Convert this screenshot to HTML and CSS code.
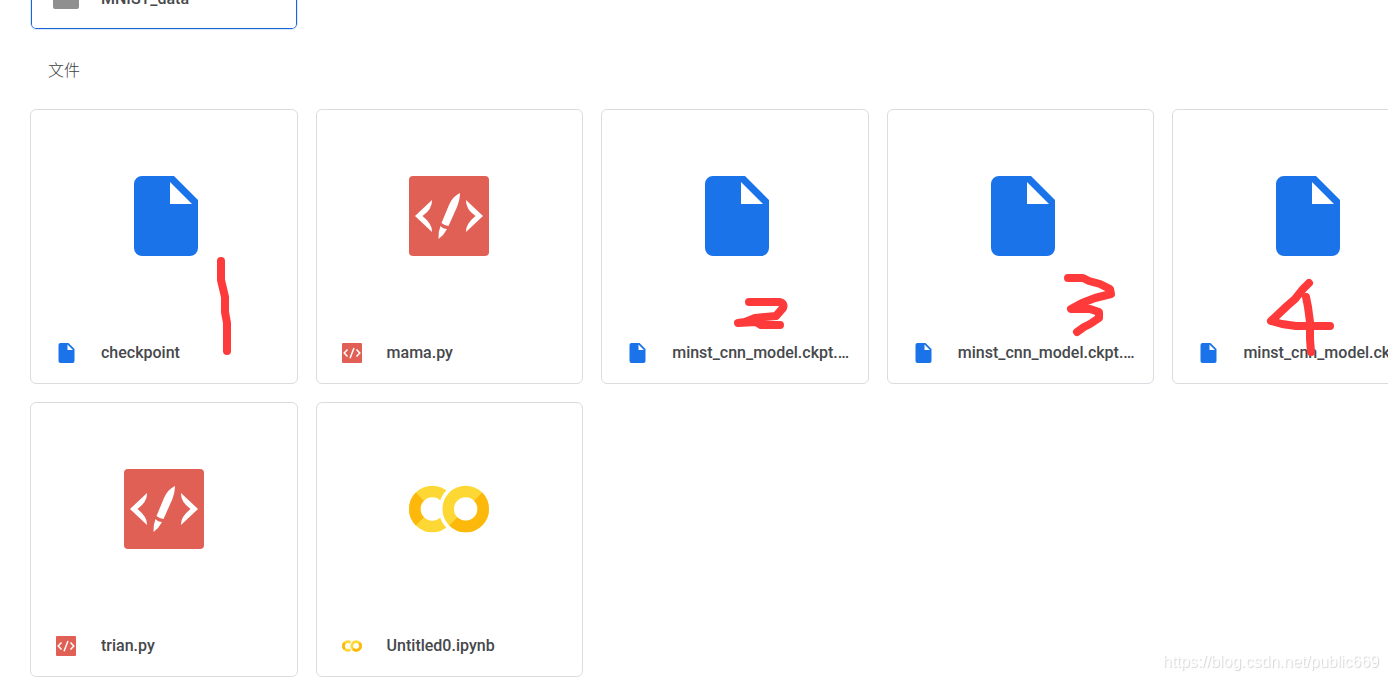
FILE: index.html
```
<!DOCTYPE html>
<html lang="zh-CN">
<head>
    <meta charset="UTF-8">
    <meta name="viewport" content="width=device-width, initial-scale=1.0">
    <title>文件</title>
    <link rel="stylesheet" href="styles.css">
</head>
<body>
    <!-- Shared icons -->
    <svg class="sprite" aria-hidden="true">
        <symbol id="icon-folder" viewBox="0 0 26 20">
            <path fill="#8f8f8f" d="M2 0H10l2.500 2.500H24A2 2 0 0 1 26 4.500V18a2 2 0 0 1-2 2H2a2 2 0 0 1-2-2V2A2 2 0 0 1 2 0z"/>
        </symbol>
        <symbol id="icon-file" viewBox="0 0 80 80">
            <path fill="#1a73e8" fill-rule="evenodd" d="M18 0H50L74 24V72a8 8 0 0 1-8 8H18a8 8 0 0 1-8-8V8a8 8 0 0 1 8-8zM46 6V28H68z"/>
        </symbol>
        <symbol id="icon-code" viewBox="0 0 80 80">
            <rect width="80" height="80" rx="4" fill="#e06055"/>
            <g fill="#fff">
                <path d="M23 24L6 40 23 56Q23.500 48 13.500 40 23.500 33 23 24z"/>
                <path d="M57 24L74 40 57 56Q56.500 48 66.500 40 56.500 33 57 24z"/>
                <path d="M51 17Q44 20 40 29L32.500 47Q36 50 39.500 50L48 31Q51 23 51 17z"/>
                <path d="M31.500 50Q34 53 38 53 35 59 29.500 63 29 56 31.500 50z"/>
            </g>
        </symbol>
        <symbol id="icon-code-small" viewBox="0 0 20 20">
            <rect width="20" height="20" rx="1" fill="#e06055"/>
            <path fill="none" stroke="#fff" stroke-width="1.500" d="M5.500 6.500L2.200 10 5.500 13.500M14.500 6.500L17.800 10 14.500 13.500M12 5L8 15.200"/>
        </symbol>
        <symbol id="icon-colab" viewBox="0 0 80 80">
            <g fill="none" stroke-width="11.500">
                <circle cx="23.300" cy="40" r="17.500" stroke="#fdd835"/>
                <path stroke="#fdb90b" d="M10.900 27.600A17.500 17.500 0 0 0 10.900 52.400"/>
            </g>
            <circle cx="56.700" cy="40" r="27" fill="#fff"/>
            <g fill="none" stroke-width="11.500">
                <circle cx="56.700" cy="40" r="17.500" stroke="#fdd835"/>
                <path stroke="#fdb90b" d="M69.100 27.600A17.500 17.500 0 0 1 44.300 52.400"/>
            </g>
        </symbol>
    </svg>

    <main class="drive">
        <section class="grid folders">
            <div class="card folder selected">
                <div class="card-label">
                    <svg class="icon-folder"><use href="#icon-folder"/></svg>
                    <span class="name">MNIST_data</span>
                </div>
            </div>
        </section>

        <h2 class="heading">文件</h2>

        <section class="grid">
            <div class="card">
                <div class="preview"><svg class="icon-large"><use href="#icon-file"/></svg></div>
                <div class="card-label">
                    <svg class="icon-small"><use href="#icon-file"/></svg>
                    <span class="name">checkpoint</span>
                </div>
                <svg class="mark" viewBox="0 0 268 275">
                    <path d="M191 152V171L195 188V203L197 214V242"/>
                </svg>
            </div>
            <div class="card">
                <div class="preview"><svg class="icon-large"><use href="#icon-code"/></svg></div>
                <div class="card-label">
                    <svg class="icon-small"><use href="#icon-code-small"/></svg>
                    <span class="name">mama.py</span>
                </div>
            </div>
            <div class="card">
                <div class="preview"><svg class="icon-large"><use href="#icon-file"/></svg></div>
                <div class="card-label">
                    <svg class="icon-small"><use href="#icon-file"/></svg>
                    <span class="name">minst_cnn_model.ckpt.meta</span>
                </div>
                <svg class="mark" viewBox="0 0 268 275">
                    <path d="M148 193H178Q184 194 182 199L175 207 154 209 144 213 137 214 155 213 160 216H179"/>
                </svg>
            </div>
            <div class="card">
                <div class="preview"><svg class="icon-large"><use href="#icon-file"/></svg></div>
                <div class="card-label">
                    <svg class="icon-small"><use href="#icon-file"/></svg>
                    <span class="name">minst_cnn_model.ckpt.index</span>
                </div>
                <svg class="mark" viewBox="0 0 268 275">
                    <path d="M181 169H196L202 172 213 175 223 180 224 185 208 189 195 194 184 200H203L212 203V209L203 215 197 218 190 223"/>
                </svg>
            </div>
            <div class="card">
                <div class="preview"><svg class="icon-large"><use href="#icon-file"/></svg></div>
                <div class="card-label">
                    <svg class="icon-small"><use href="#icon-file"/></svg>
                    <span class="name">minst_cnn_model.ckpt.data</span>
                </div>
                <svg class="mark" viewBox="0 0 268 275">
                    <path d="M137 174L131 180 123 190 115 197 99 212 110 215 124 217H158"/>
                    <path d="M134 188L136 198 138 213V230L139 243"/>
                </svg>
            </div>
            <div class="card">
                <div class="preview"><svg class="icon-large"><use href="#icon-code"/></svg></div>
                <div class="card-label">
                    <svg class="icon-small"><use href="#icon-code-small"/></svg>
                    <span class="name">trian.py</span>
                </div>
            </div>
            <div class="card">
                <div class="preview"><svg class="icon-large"><use href="#icon-colab"/></svg></div>
                <div class="card-label">
                    <svg class="icon-small"><use href="#icon-colab"/></svg>
                    <span class="name">Untitled0.ipynb</span>
                </div>
            </div>
        </section>
    </main>

    <div class="watermark">https://blog.csdn.net/public669</div>
</body>
</html>
```
FILE: styles.css
```
* {
    box-sizing: border-box;
}

body {
    margin: 0;
    background: #fff;
    color: #46484b;
    font-family: Roboto, "Noto Sans CJK SC", sans-serif;
    overflow: hidden;
}

.sprite {
    display: none;
}

/* The last column runs past the right edge of the window */
.drive {
    margin-right: -52px;
    padding-left: 30px;
}

.grid {
    display: grid;
    grid-template-columns: repeat(5, 1fr);
    gap: 18px;
}

.folders {
    margin-top: -33px;
}

.card {
    position: relative;
    min-width: 0;
    border: 1px solid #dadce0;
    border-radius: 6px;
}

.card.selected {
    border-color: #dce8fa;
    box-shadow: inset 0 0 0 1px #1967d2;
}

.preview {
    display: flex;
    align-items: center;
    justify-content: center;
    height: 212px;
}

.card-label {
    display: flex;
    align-items: center;
    gap: 25px;
    height: 61px;
    padding: 0 16px 0 25px;
}

.folder .card-label {
    gap: 22px;
    padding-left: 22px;
}

.name {
    min-width: 0;
    overflow: hidden;
    text-overflow: ellipsis;
    white-space: nowrap;
    font-size: 16px;
    font-weight: 500;
    line-height: 24px;
}

.icon-large {
    width: 80px;
    height: 80px;
}

.icon-small {
    flex: none;
    width: 20px;
    height: 20px;
}

.icon-folder {
    flex: none;
    width: 26px;
    height: 20px;
}

.heading {
    margin: 29px 0 26px;
    padding-left: 18px;
    color: #3c4043;
    font-size: 16px;
    font-weight: 300;
    line-height: 24px;
}

/* Handwritten numbers */
.mark {
    position: absolute;
    inset: -1px;
    width: 268px;
    height: 275px;
    fill: none;
    stroke: #fe3a3a;
    stroke-width: 8;
    stroke-linecap: round;
    stroke-linejoin: round;
}

.watermark {
    position: fixed;
    right: 9px;
    bottom: 8px;
    color: #fff;
    font-family: "Liberation Sans", Arial, sans-serif;
    font-size: 16px;
    line-height: 20px;
    text-shadow: 1px 1px 1px #d4d4d4;
}
```
